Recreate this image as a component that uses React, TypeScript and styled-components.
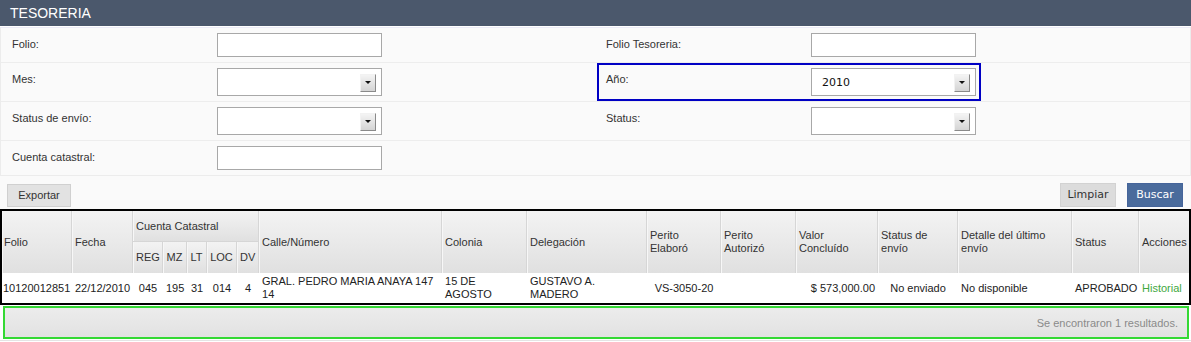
import React from "react";
import styled, { createGlobalStyle, css } from "styled-components";

const GlobalStyle = createGlobalStyle`
  html, body { margin: 0; padding: 0; background: #ffffff; }
  body {
    font-family: "Liberation Sans", Arial, sans-serif;
    font-size: 11px;
    color: #333333;
  }
`;

const Page = styled.div`
  width: 1191px;
  border-bottom: 1px solid #e4e4e4;
  padding-bottom: 1px;
`;

const TitleBar = styled.div`
  height: 26px;
  line-height: 26px;
  padding-left: 10px;
  background: #4b586c;
  color: #ffffff;
  font-size: 14px;
  border-bottom: 1px solid #ffffff;
`;

const Form = styled.div`
  background: #fafafa;
  border-left: 1px solid #ececec;
  border-right: 1px solid #ececec;
`;

const FormRow = styled.div<{ $first?: boolean }>`
  display: grid;
  grid-template-columns: 594px 1fr;
  border-top: 1px solid ${(p) => (p.$first ? "#ecebf7" : "#ededed")};
`;

const Half = styled.div`
  display: flex;
`;

const Field = styled.div<{ $highlight?: boolean }>`
  display: flex;
  align-items: flex-start;
  width: 380px;
  margin-left: 2px;
  padding: 3px 0;
  border: 2px solid ${(p) => (p.$highlight ? "#0000c4" : "transparent")};
`;

const Label = styled.div`
  width: 205px;
  padding: 5px 0 0 7px;
  line-height: 13px;
  color: #333333;
`;

const TextInput = styled.div`
  box-sizing: border-box;
  width: 165px;
  height: 24px;
  border: 1px solid #a8a8a8;
  background: #ffffff;
`;

const Select = styled.div`
  box-sizing: border-box;
  width: 165px;
  height: 28px;
  border: 1px solid #a8a8a8;
  background: #ffffff;
  display: flex;
  align-items: center;
  justify-content: space-between;
  padding: 0 5px 0 10px;
  font-family: "DejaVu Sans", Verdana, sans-serif;
  font-size: 11px;
  color: #111111;
`;

const DropButton = styled.span`
  box-sizing: border-box;
  width: 16px;
  height: 18px;
  margin-top: 1px;
  display: flex;
  align-items: center;
  justify-content: center;
  background: linear-gradient(to bottom, #f4f4f4, #d4d4d4);
  border-top: 1px solid #f2f2f2;
  border-left: 1px solid #f2f2f2;
  border-right: 1px solid #8a8a8a;
  border-bottom: 1px solid #8a8a8a;
  &::after {
    content: "";
    border-left: 3px solid transparent;
    border-right: 3px solid transparent;
    border-top: 3px solid #111111;
  }
`;

const ButtonBar = styled.div`
  display: flex;
  align-items: flex-end;
  gap: 11px;
  background: #fafafa;
  border-top: 1px solid #ececec;
  padding: 7px 8px 2px 7px;
`;

const Spacer = styled.div`
  flex: 1;
`;

const Button = styled.div<{ $variant?: "plain" | "light" | "primary" }>`
  box-sizing: border-box;
  height: 24px;
  line-height: 22px;
  text-align: center;
  font-size: 11px;
  ${(p) =>
    p.$variant === "primary"
      ? css`
          width: 56px;
          background: #4a6b9c;
          border: 1px solid #45649a;
          color: #ffffff;
          font-family: "DejaVu Sans", Verdana, sans-serif;
        `
      : p.$variant === "light"
      ? css`
          width: 56px;
          background: #dcdcdc;
          border: 1px solid #d2d2d2;
          color: #333333;
          font-family: "DejaVu Sans", Verdana, sans-serif;
        `
      : css`
          width: 64px;
          height: 23px;
          line-height: 21px;
          background: #e2e2e2;
          border: 1px solid #d0d0d0;
          color: #333333;
        `}
`;

const TableFrame = styled.div`
  border: 2px solid #000000;
`;

const Table = styled.table`
  width: 1187px;
  table-layout: fixed;
  border-collapse: separate;
  border-spacing: 0;
  font-size: 11px;
`;

const Col = styled.col<{ $w: number }>`
  width: ${(p) => p.$w}px;
`;

const HeadRow = styled.tr`
  height: 31px;
`;

const Th = styled.th<{ $center?: boolean; $last?: boolean; $first?: boolean }>`
  font-weight: normal;
  color: #333333;
  text-align: ${(p) => (p.$center ? "center" : "left")};
  vertical-align: middle;
  padding: 0 3px 0 ${(p) => (p.$first ? "2px" : "3px")};
  line-height: 13px;
  background: linear-gradient(to bottom, #f3f3f3, #e0e0e0);
  border-right: ${(p) => (p.$last ? "none" : "1px solid #d6d6d6")};
  box-shadow: inset 1px 0 0 #f7f7f7;
`;

const GroupTh = styled(Th)`
  border-bottom: 1px solid #d6d6d6;
`;

const DataRow = styled.tr`
  height: 30px;
  background: #ffffff;
`;

const Td = styled.td<{ $align?: "left" | "center" | "right"; $nowrap?: boolean; $first?: boolean }>`
  color: #222222;
  padding: 2px 3px 2px ${(p) => (p.$first ? "1px" : "3px")};
  line-height: 13px;
  vertical-align: middle;
  text-align: ${(p) => p.$align || "left"};
  white-space: ${(p) => (p.$nowrap ? "nowrap" : "normal")};
  overflow: visible;
`;

const Link = styled.span`
  color: #3fa83f;
`;

const Footer = styled.div`
  margin: 1px 2px 0 3px;
  height: 29px;
  border: 2px solid #34d934;
  background: linear-gradient(to bottom, #ececec, #e2e2e2);
  display: flex;
  align-items: center;
  justify-content: flex-end;
  padding-right: 9px;
  color: #8a8a8a;
  font-size: 11px;
`;

type FieldDef = { label: string; kind: "input" | "select"; value?: string; highlight?: boolean };

const rows: [FieldDef, FieldDef | null][] = [
  [{ label: "Folio:", kind: "input" }, { label: "Folio Tesoreria:", kind: "input" }],
  [{ label: "Mes:", kind: "select" }, { label: "Año:", kind: "select", value: "2010", highlight: true }],
  [{ label: "Status de envío:", kind: "select" }, { label: "Status:", kind: "select" }],
  [{ label: "Cuenta catastral:", kind: "input" }, null],
];

const colWidths = [70, 61, 30, 24, 20, 30, 22, 183, 85, 120, 74, 75, 82, 80, 114, 67, 50];

function FieldView({ f }: { f: FieldDef }) {
  return (
    <Field $highlight={f.highlight}>
      <Label>{f.label}</Label>
      {f.kind === "input" ? (
        <TextInput />
      ) : (
        <Select>
          <span>{f.value ?? ""}</span>
          <DropButton />
        </Select>
      )}
    </Field>
  );
}

export default function App() {
  return (
    <Page>
      <GlobalStyle />
      <TitleBar>TESORERIA</TitleBar>
      <Form>
        {rows.map((r, i) => (
          <FormRow key={i} $first={i === 0}>
            <Half>
              <FieldView f={r[0]} />
            </Half>
            <Half>{r[1] && <FieldView f={r[1]} />}</Half>
          </FormRow>
        ))}
      </Form>
      <ButtonBar>
        <Button>Exportar</Button>
        <Spacer />
        <Button $variant="light">Limpiar</Button>
        <Button $variant="primary">Buscar</Button>
      </ButtonBar>
      <TableFrame>
        <Table>
          <colgroup>
            {colWidths.map((w, i) => (
              <Col key={i} $w={w} />
            ))}
          </colgroup>
          <thead>
            <HeadRow>
              <Th rowSpan={2} $first>
                Folio
              </Th>
              <Th rowSpan={2}>Fecha</Th>
              <GroupTh colSpan={5}>Cuenta Catastral</GroupTh>
              <Th rowSpan={2}>Calle/Número</Th>
              <Th rowSpan={2}>Colonia</Th>
              <Th rowSpan={2}>Delegación</Th>
              <Th rowSpan={2}>Perito Elaboró</Th>
              <Th rowSpan={2}>Perito Autorizó</Th>
              <Th rowSpan={2}>Valor Concluído</Th>
              <Th rowSpan={2}>Status de envío</Th>
              <Th rowSpan={2}>Detalle del último envío</Th>
              <Th rowSpan={2}>Status</Th>
              <Th rowSpan={2} $last>
                Acciones
              </Th>
            </HeadRow>
            <HeadRow>
              <Th $center>REG</Th>
              <Th $center>MZ</Th>
              <Th $center>LT</Th>
              <Th $center>LOC</Th>
              <Th $center>DV</Th>
            </HeadRow>
          </thead>
          <tbody>
            <DataRow>
              <Td $nowrap $first>
                10120012851
              </Td>
              <Td $nowrap>22/12/2010</Td>
              <Td $align="center">045</Td>
              <Td $align="center">195</Td>
              <Td $align="center">31</Td>
              <Td $align="center">014</Td>
              <Td $align="center">4</Td>
              <Td>GRAL. PEDRO MARIA ANAYA 147 14</Td>
              <Td>15 DE AGOSTO</Td>
              <Td>GUSTAVO A. MADERO</Td>
              <Td $align="center">VS-3050-20</Td>
              <Td></Td>
              <Td $align="right" $nowrap>
                $ 573,000.00
              </Td>
              <Td $align="center">No enviado</Td>
              <Td>No disponible</Td>
              <Td $nowrap>APROBADO</Td>
              <Td>
                <Link>Historial</Link>
              </Td>
            </DataRow>
          </tbody>
        </Table>
      </TableFrame>
      <Footer>Se encontraron 1 resultados.</Footer>
    </Page>
  );
}
